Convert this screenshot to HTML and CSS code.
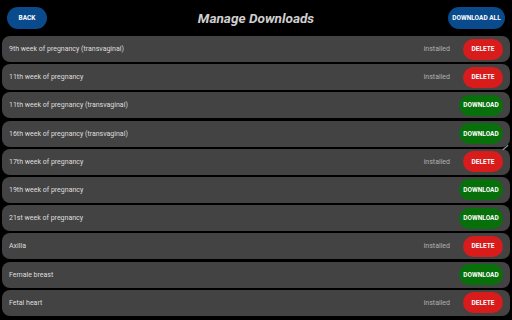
FILE: index.html
```html
<!DOCTYPE html>
<html>
<head>
<meta charset="utf-8">
<link rel="stylesheet" href="styles.css">
</head>
<body>
<div class="page">
  <header class="top">
    <button class="pill blue back">BACK</button>
    <h1 class="title">Manage Downloads</h1>
    <button class="pill blue all">DOWNLOAD ALL</button>
  </header>
  <div class="list">
    <div class="row"><span class="name">9th week of pregnancy (transvaginal)</span><span class="status">installed</span><button class="pill red">DELETE</button></div>
    <div class="row"><span class="name">11th week of pregnancy</span><span class="status">installed</span><button class="pill red">DELETE</button></div>
    <div class="row"><span class="name">11th week of pregnancy (transvaginal)</span><button class="pill green">DOWNLOAD</button></div>
    <div class="row"><span class="name">16th week of pregnancy (transvaginal)</span><button class="pill green">DOWNLOAD</button></div>
    <div class="row"><span class="name">17th week of pregnancy</span><span class="status">installed</span><button class="pill red">DELETE</button><span class="tick"></span></div>
    <div class="row"><span class="name">19th week of pregnancy</span><button class="pill green">DOWNLOAD</button></div>
    <div class="row"><span class="name">21st week of pregnancy</span><button class="pill green">DOWNLOAD</button></div>
    <div class="row"><span class="name">Axilla</span><span class="status">installed</span><button class="pill red">DELETE</button></div>
    <div class="row"><span class="name">Female breast</span><button class="pill green">DOWNLOAD</button></div>
    <div class="row"><span class="name">Fetal heart</span><span class="status">installed</span><button class="pill red">DELETE</button></div>
  </div>
</div>
</body>
</html>
```
FILE: styles.css
```css
html, body {
  margin: 0;
  padding: 0;
  background: #000;
  width: 512px;
  height: 320px;
  overflow: hidden;
  font-family: Roboto, "Liberation Sans", sans-serif;
}
.page {
  display: flex;
  flex-direction: column;
}
.top {
  height: 36px;
  display: grid;
  grid-template-columns: 1fr auto 1fr;
  align-items: center;
  padding: 0 7px 0 7px;
  box-sizing: border-box;
}
.title {
  margin: 0;
  font-size: 13.6px;
  font-weight: 700;
  font-style: italic;
  color: #cfcfcf;
}
.pill {
  border: none;
  border-radius: 12px;
  height: 21px;
  color: #fff;
  font-family: Roboto, "Liberation Sans", sans-serif;
  font-weight: 700;
  font-size: 6.5px;
  padding: 0;
  display: flex;
  align-items: center;
  justify-content: center;
}
.blue { background: #0a4b8e; height: 22px; }
.back { width: 40px; justify-self: start; }
.all { width: 57px; justify-self: end; }
.red { background: #d81b1b; width: 40px; }
.green { background: #07700b; width: 44px; }
.list {
  display: flex;
  flex-direction: column;
  gap: 2.2px;
  padding: 0 2px;
}
.row {
  position: relative;
  height: 26px;
  background: #434343;
  border-radius: 8px;
  display: flex;
  align-items: center;
  padding: 0 7px 0 7px;
  box-sizing: border-box;
}
.name {
  flex: 1;
  color: #dedede;
  font-size: 7px;
}
.status {
  color: #b0b0b0;
  font-size: 7px;
  margin-right: 13px;
}
.tick {
  position: absolute;
  right: 1px;
  top: -2px;
  width: 7px;
  height: 1px;
  background: #9a9a9a;
  transform: rotate(-40deg);
}
```
